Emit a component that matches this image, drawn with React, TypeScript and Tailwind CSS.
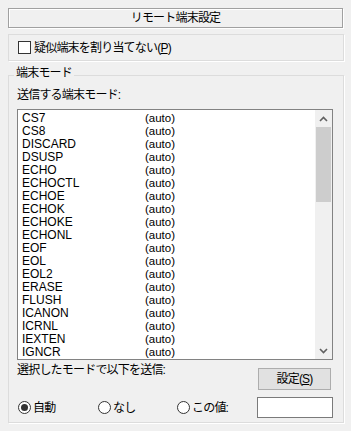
import React from "react";

const FONT = { fontFamily: '"Liberation Sans","Noto Sans CJK JP",sans-serif' };

const items = [
  "CS7", "CS8", "DISCARD", "DSUSP", "ECHO", "ECHOCTL", "ECHOE", "ECHOK", "ECHOKE",
  "ECHONL", "EOF", "EOL", "EOL2", "ERASE", "FLUSH", "ICANON", "ICRNL", "IEXTEN", "IGNCR",
];

function Chevron({ up }: { up: boolean }) {
  return (
    <svg width="9" height="6" viewBox="0 0 9 6">
      <polyline
        points={up ? "1,5 4.5,1.5 8,5" : "1,1 4.5,4.5 8,1"}
        fill="none"
        stroke="#606060"
        strokeWidth="1.6"
      />
    </svg>
  );
}

function Radio({ checked }: { checked?: boolean }) {
  return (
    <div className="w-[13px] h-[13px] rounded-full border border-[#333333] bg-white flex items-center justify-center shrink-0">
      {checked && <div className="w-[7px] h-[7px] rounded-full bg-[#333333]" />}
    </div>
  );
}

export default function App() {
  return (
    <div
      className="w-[351px] h-[431px] bg-[#f0f0f0] pt-[8px] text-black text-[12px] tracking-[-0.8px]"
      style={FONT}
    >
      <div className="ml-[8px] w-[335px] h-[20px] border border-[#a0a0a0] shadow-[1px_1px_0_#ffffff,inset_1px_1px_0_#ffffff] flex items-center justify-center leading-[16px]">
        リモート端末設定
      </div>

      <div className="ml-[8px] mt-[6px] w-[336px] h-[27px] border border-[#dcdcdc] shadow-[1px_1px_0_#ffffff] flex items-center pl-[9px]">
        <div className="w-[13px] h-[13px] border border-[#333333] bg-white shrink-0" />
        <span className="ml-[3px] leading-[16px]">
          疑似端末を割り当てない(<span className="underline">P</span>)
        </span>
      </div>

      <div className="relative ml-[8px] mt-[14px] w-[336px] h-[348px] border border-[#dcdcdc] shadow-[1px_1px_0_#ffffff] pl-[8px] pr-[10px] pt-[11px]">
        <div className="absolute left-[5px] -top-[11px] px-[2px] bg-[#f0f0f0] leading-[16px]">
          端末モード
        </div>
        <div className="leading-[16px]">送信する端末モード:</div>

        <div className="mt-[6px] h-[251px] border border-[#828282] bg-white flex">
          <div
            className="flex-1 pt-[2px] pl-[4px] text-[12px] leading-[13px] tracking-normal"
            style={{ fontFamily: '"Liberation Sans",sans-serif' }}
          >
            {items.map((it) => (
              <div key={it} className="flex h-[13px]">
                <div className="w-[123px] whitespace-nowrap">{it}</div>
                <div className="text-[11.5px]">(auto)</div>
              </div>
            ))}
          </div>
          <div className="w-[17px] bg-[#f0f0f0] flex flex-col">
            <div className="h-[17px] flex items-center justify-center">
              <Chevron up />
            </div>
            <div className="flex-1">
              <div className="mx-[1px] h-[75px] bg-[#cdcdcd]" />
            </div>
            <div className="h-[17px] flex items-center justify-center">
              <Chevron up={false} />
            </div>
          </div>
        </div>

        <div className="mt-[2px] flex justify-between items-start">
          <div className="leading-[16px]">選択したモードで以下を送信:</div>
          <div className="mt-[6px] mr-[2px] w-[73px] h-[22px] border border-[#adadad] bg-[#e1e1e1] flex items-center justify-center leading-[16px]">
            設定(<span className="underline">S</span>)
          </div>
        </div>

        <div className="mt-[7px] h-[21px] flex items-center pl-[1px]">
          <div className="w-[80px] flex items-center gap-[2px]">
            <Radio checked />
            <span className="leading-[16px]">自動</span>
          </div>
          <div className="w-[79px] flex items-center gap-[2px]">
            <Radio />
            <span className="leading-[16px]">なし</span>
          </div>
          <div className="w-[80px] flex items-center gap-[2px]">
            <Radio />
            <span className="leading-[16px]">この値:</span>
          </div>
          <div className="flex-1 h-[21px] border border-[#7a7a7a] bg-white" />
        </div>
      </div>
    </div>
  );
}
